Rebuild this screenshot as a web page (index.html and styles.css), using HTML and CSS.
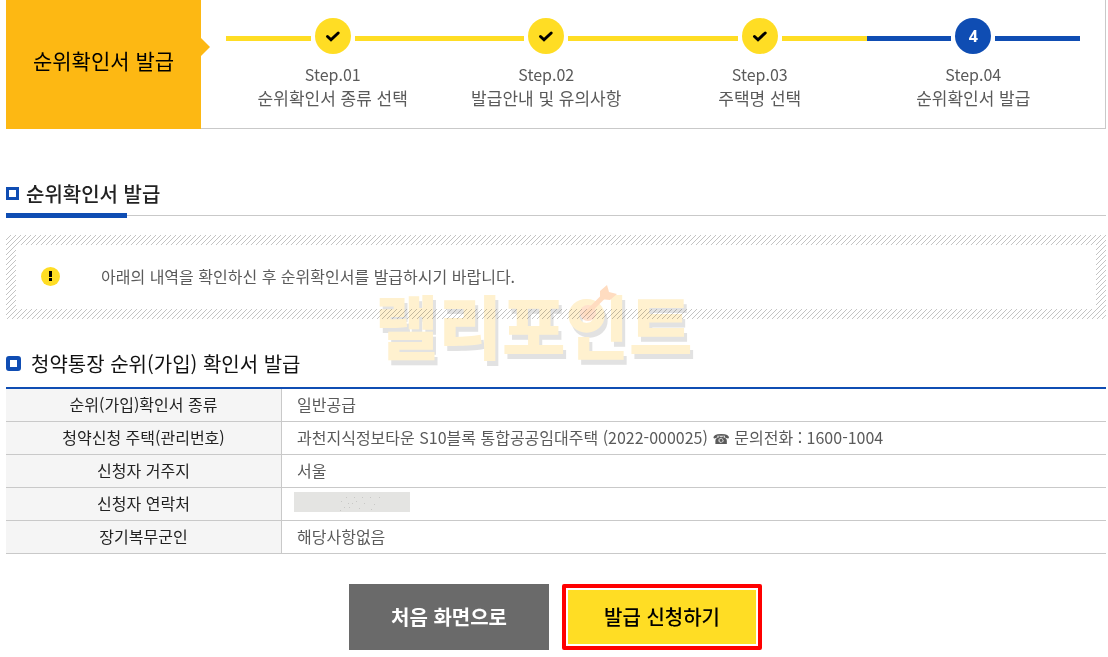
FILE: index.html
```html
<!DOCTYPE html>
<html lang="ko">
<head>
<meta charset="utf-8">
<meta name="viewport" content="width=device-width, initial-scale=1">
<title>순위확인서 발급</title>
<link rel="stylesheet" href="styles.css">
</head>
<body>
<main class="page">
  <header class="process">
    <h1 class="process-title">순위확인서 발급</h1>
    <ol class="steps">
      <li class="step">
        <div class="track"><span class="mark"><svg width="18" height="14" viewBox="0 0 18 14" aria-hidden="true"><path d="M3.5 7.5 7 10.8 14.2 4"/></svg></span></div>
        <span class="step-no">Step.01</span><span>순위확인서 종류 선택</span>
      </li>
      <li class="step">
        <div class="track"><span class="mark"><svg width="18" height="14" viewBox="0 0 18 14" aria-hidden="true"><path d="M3.5 7.5 7 10.8 14.2 4"/></svg></span></div>
        <span class="step-no">Step.02</span><span>발급안내 및 유의사항</span>
      </li>
      <li class="step">
        <div class="track"><span class="mark"><svg width="18" height="14" viewBox="0 0 18 14" aria-hidden="true"><path d="M3.5 7.5 7 10.8 14.2 4"/></svg></span></div>
        <span class="step-no">Step.03</span><span>주택명 선택</span>
      </li>
      <li class="step current" aria-current="step">
        <div class="track"><span class="mark">4</span></div>
        <span class="step-no">Step.04</span><span>순위확인서 발급</span>
      </li>
    </ol>
  </header>

  <h2 class="section-title">순위확인서 발급</h2>

  <div class="notice">
    <div class="notice-body">
      <svg class="alert" width="19" height="19" viewBox="0 0 19 19" aria-hidden="true"><circle cx="9.5" cy="9.5" r="9.5" fill="#ffdd24"/><path d="M8 4h3v6H8zM8 11h3v3H8z" fill="#000"/></svg>
      <p>아래의 내역을 확인하신 후 순위확인서를 발급하시기 바랍니다.</p>
    </div>
    <div class="watermark" aria-hidden="true">랠리포인트
      <svg class="dart" width="46" height="42" viewBox="0 0 46 42"><circle cx="15" cy="29" r="8" fill="#ffe0cc"/><path d="M12 31 30 13" stroke="#ffdcc0" stroke-width="5"/><path d="M27 7 34 1 36 8 44 10 37 16 27 15z" fill="#ffdcc0"/></svg>
    </div>
  </div>

  <h3 class="sub-title">청약통장 순위(가입) 확인서 발급</h3>
  <table class="info">
    <tbody>
      <tr><th scope="row">순위(가입)확인서 종류</th><td>일반공급</td></tr>
      <tr><th scope="row">청약신청 주택(관리번호)</th><td>과천지식정보타운 S10블록 통합공공임대주택 (2022-000025) <span class="phone">☎</span> 문의전화 : 1600-1004</td></tr>
      <tr><th scope="row">신청자 거주지</th><td>서울</td></tr>
      <tr><th scope="row">신청자 연락처</th><td class="masked"><svg width="116" height="20" viewBox="0 0 116 20" aria-hidden="true"><path fill="#e4e4e2" d="M0 0h116v20H0z"/><path fill="#c8c8c6" d="M52 5h1v1h-1zM60 5h1v1h-1zM68 5h1v1h-1zM76 5h1v1h-1zM85 5h1v1h-1zM47 9h1v1h-1zM54 11h1v1h-1zM62 9h1v1h-1zM70 11h1v1h-1zM80 12h1v1h-1zM58 11h1v1h-1zM50 15h1v1h-1zM55 15h1v1h-1zM65 16h1v1h-1zM77 17h1v1h-1zM46 18h1v1h-1z"/></svg></td></tr>
      <tr><th scope="row">장기복무군인</th><td>해당사항없음</td></tr>
    </tbody>
  </table>

  <div class="actions">
    <button type="button" class="btn btn-home">처음 화면으로</button>
    <button type="button" class="btn btn-apply">발급 신청하기</button>
  </div>
</main>
</body>
</html>
```
FILE: styles.css
```css
*,
*::before,
*::after { box-sizing: border-box; }

body {
  margin: 0;
  background: #fff;
  color: #5a5a5a;
  font-family: "Noto Sans CJK KR", sans-serif;
  font-size: 16px;
  line-height: 24px;
}

h1, h2, h3, p, ol { margin: 0; padding: 0; }

.page { padding: 0 2px 0 6px; }

/* Step header */
.process {
  display: flex;
  border: 1px solid #c9c9c9;
  border-width: 0 1px 1px 0;
}

.process-title {
  position: relative;
  display: flex;
  align-items: center;
  justify-content: center;
  width: 195px;
  margin-bottom: -1px;
  padding-bottom: 10px;
  background: #fdb813;
  color: #000;
  font-size: 21px;
  font-weight: 400;
}

.process-title::after {
  content: "";
  position: absolute;
  left: 100%;
  top: 38px;
  border: 9px solid transparent;
  border-left-color: #fdb813;
  border-right: 0;
}

.steps {
  flex: 1;
  display: flex;
  padding: 18px 25px 19px;
  list-style: none;
}

.step {
  flex: 1;
  display: flex;
  flex-direction: column;
  align-items: center;
  font-size: 17px;
  line-height: 23px;
  --tone: #ffdd24;
}

.step-no {
  font-size: 16px;
  line-height: 24px;
}

.current { --tone: #0f4db3; }

.track {
  display: flex;
  align-items: center;
  gap: 4px;
  width: 100%;
  margin-bottom: 8px;
}

.track::before,
.track::after {
  content: "";
  flex: 1;
  height: 5px;
  margin-top: 5px;
  background: var(--tone);
}

.mark {
  display: flex;
  align-items: center;
  justify-content: center;
  width: 36px;
  height: 36px;
  border-radius: 50%;
  background: var(--tone);
  color: #fff;
  font: 700 16px/24px "Open Sans", sans-serif;
}

.mark path {
  fill: none;
  stroke: #000;
  stroke-width: 3;
  stroke-linecap: round;
}

/* Section heading */
.section-title {
  position: relative;
  display: flex;
  align-items: center;
  gap: 7px;
  margin-top: 50px;
  padding-bottom: 7px;
  border-bottom: 1px solid #c9c9c9;
  color: #222;
  font-size: 20px;
  font-weight: 500;
  line-height: 29px;
}

.section-title::before {
  content: "";
  width: 13px;
  height: 13px;
  border: 3px solid #0f4db3;
}

.section-title::after {
  content: "";
  position: absolute;
  left: 0;
  bottom: -3px;
  width: 121px;
  height: 5px;
  background: #0f4db3;
}

/* Hatched notice */
.notice {
  position: relative;
  margin-top: 19px;
  padding: 10px;
  background: url("data:image/svg+xml,%3Csvg xmlns='http://www.w3.org/2000/svg' width='5' height='5'%3E%3Cpath fill='%23c4c4c4' d='M4 0h1v1H4zM3 1h1v1H3zM2 2h1v1H2zM1 3h1v1H1zM0 4h1v1H0z'/%3E%3C/svg%3E");
}

.notice-body {
  display: flex;
  align-items: center;
  gap: 41px;
  padding: 19px 25px 21px;
  background: #fff;
}

.watermark {
  position: absolute;
  left: 369px;
  top: 55px;
  color: #fff1cf;
  font-size: 69px;
  font-weight: 900;
  line-height: 68px;
  white-space: nowrap;
  text-shadow: 3px 5px 0 #e2e2e2;
  mix-blend-mode: multiply;
  pointer-events: none;
}

.dart {
  position: absolute;
  left: 198px;
  top: -6px;
}

/* Details table */
.sub-title {
  display: flex;
  align-items: center;
  gap: 10px;
  margin-top: 30px;
  padding-bottom: 9px;
  color: #111;
  font-size: 20px;
  font-weight: 400;
  line-height: 29px;
}

.sub-title::before {
  content: "";
  width: 15px;
  height: 15px;
  border: 4px solid #0f4db3;
  border-radius: 3px;
}

.info {
  width: 100%;
  border-top: 2px solid #0f4db3;
  border-spacing: 0;
}

.info th,
.info td {
  height: 33px;
  padding: 0 15px 2px;
  border-bottom: 1px solid #c9c9c9;
  font-weight: 400;
}

.info th {
  width: 276px;
  border-right: 1px solid #c9c9c9;
  background: #f5f5f5;
  color: #222;
}

.info td { text-align: left; }

.info .masked { padding-left: 12px; }

.masked svg { display: block; margin-bottom: 2px; }

.phone {
  font-family: "DejaVu Sans", sans-serif;
  font-size: 14px;
  font-weight: 700;
  line-height: 16px;
}

/* Buttons */
.actions {
  display: flex;
  justify-content: center;
  gap: 13px;
  padding: 30px 1px 7px 0;
}

.btn {
  width: 200px;
  height: 66px;
  padding: 0 0 2px;
  border: 0;
  font-family: inherit;
  font-size: 20px;
  font-weight: 500;
  cursor: pointer;
}

.btn-home {
  background: #6a6a6a;
  color: #fff;
  font-weight: 700;
}

.btn-apply {
  border: 4px solid #f00;
  border-radius: 2px;
  background: #ffdd24;
  box-shadow: inset 0 0 0 2px #fff;
  color: #000;
}
```
